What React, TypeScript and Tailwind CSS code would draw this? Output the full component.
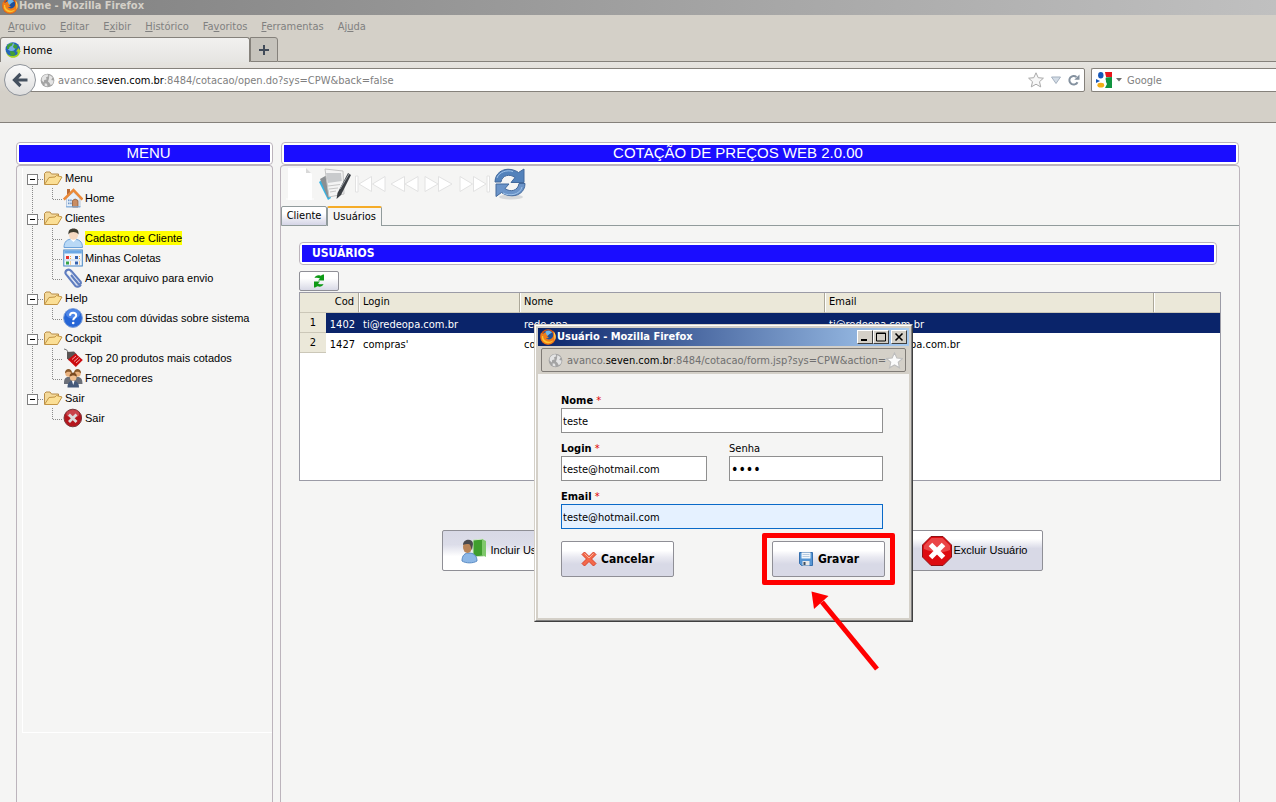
import React from "react";

const UI = "font-['DejaVu_Sans_Condensed','DejaVu_Sans',sans-serif]";
const ARIAL = "font-['Liberation_Sans',Arial,sans-serif]";

type IconProps = { className?: string };

function FirefoxIcon({ className }: IconProps) {
  return (
    <svg viewBox="0 0 16 16" className={className} aria-hidden="true">
      <circle cx="8" cy="8" r="7.8" fill="#d9560f" />
      <circle cx="8" cy="6.500" r="5.300" fill="#1d4f9c" />
      <path d="M5.500 2.500c2-1.500 5-1 6.500 1l-2.500 1.500-2 2-2-1.500z" fill="#6fb7e8" />
      <path d="M1 3.500C0 6 0 12 4.500 14.500c5 2.500 10-.5 11-5 .6-3-.5-5.500-2-7 .3 3 0 5.500-2 7-2 1.500-4.500 1-5.500-.2 1.500.2 2.500-.3 3.200-1.200C8 8.300 7 7.500 7.500 6.300 6.500 6 5.800 5 6 3.500 4.500 3.600 3.500 4.200 3 5 2 4.600 1.500 4.200 1 3.500z" fill="#ef7d1a" />
      <path d="M2 7c-.5 3 .5 5.500 3.500 6.800 3 1.200 6.500 0 8-2.600-2 1.500-5 2-7.300.7C4 10.700 3 9 3.200 7z" fill="#fbc42f" />
      <path d="M13.500 2.500c2.300 2.500 2.800 6 1 9 .2-3-.2-6-1-9z" fill="#fde06a" />
    </svg>
  );
}

function GreenGlobe({ className }: IconProps) {
  return (
    <svg viewBox="0 0 16 16" className={className} aria-hidden="true">
      <circle cx="7.800" cy="7.500" r="7.300" fill="#2566b8" />
      <circle cx="6.500" cy="5" r="4" fill="#8cc4f2" opacity=".8" />
      <path d="M2 4c1.500-2.500 4-3.200 6-3l-1 2.500L4.500 5 4 7 2 7zM9 2l3.500 1.500L12 6.500 9.500 6.500 8 5zM5 9l4 .5 1.500 2.500L8 14.200 5.500 13z" fill="#3f9f35" />
      <path d="M.8 9.500c2 5 8 6 11.700 2.500V9.500H11L13.500 6 16 9.700h-1c0 3-3 6-7 6.100-3.500 0-6.500-2.500-7.200-6.300z" fill="#a5d51f" />
    </svg>
  );
}

function GrayGlobe({ className }: IconProps) {
  return (
    <svg viewBox="0 0 16 16" className={className} aria-hidden="true">
      <circle cx="8" cy="8" r="7.300" fill="#a3a3a3" />
      <path d="M2 5C3.500 2.500 5.500 1.500 8 1.300L9 3.500 6.500 4.500 7 7 4.500 7.500 4 10 1.800 8zM10 2l3.500 2.500-1.500 3 2.500.5-.5 3-2.500 2L10 10.500 8.500 9l1-3zM5 11l2.500.5L8 14.500l-3-1z" fill="#e4e4e4" />
    </svg>
  );
}

function BackArrow({ className }: IconProps) {
  return (
    <svg viewBox="0 0 16 16" className={className} aria-hidden="true">
      <path d="M8.500 2L2.500 8l6 6M3 8h12.500" fill="none" stroke="#44505f" strokeWidth="3.200" />
    </svg>
  );
}

function Star({ className, fill = "#f7f7f7", stroke = "#a9a9a9" }: IconProps & { fill?: string; stroke?: string }) {
  return (
    <svg viewBox="0 0 16 16" className={className} aria-hidden="true">
      <path d="M8 .8l2.200 4.900 5.200.5-3.900 3.500 1.200 5.200L8 12.200l-4.700 2.700 1.200-5.200L.6 6.200l5.200-.5z" fill={fill} stroke={stroke} />
    </svg>
  );
}

function ReloadIcon({ className }: IconProps) {
  return (
    <svg viewBox="0 0 12 12" className={className} aria-hidden="true">
      <path d="M9.500 8.200A4.300 4.300 0 1 1 8.500 3" fill="none" stroke="#84919f" strokeWidth="2" />
      <path d="M11.500.5v5.200H6.300l1.700-1.700L9.500 2.500z" fill="#84919f" />
    </svg>
  );
}

function GoogleIcon({ className }: IconProps) {
  return (
    <svg viewBox="0 0 16 16" className={className} aria-hidden="true">
      <path d="M7 0h9v5H10z" fill="#e8141b" />
      <path d="M16 5v11H8l2-7-1-3.500z" fill="#11943f" />
      <path d="M5 0h4l1 5-1 3 2 4-2 4H1l-1-3 4-4-2-4z" fill="#fff" />
      <ellipse cx="4.800" cy="3.200" rx="2.700" ry="3.200" fill="#1556b8" />
      <ellipse cx="4.800" cy="13.200" rx="3.400" ry="2.400" fill="#f3ae16" />
      <path d="M0 7l4 2-4 2z" fill="#1556b8" />
    </svg>
  );
}

function Folder() {
  return (
    <svg viewBox="0 0 20 16" className="h-4 w-5" aria-hidden="true">
      <path d="M1.500 14V3.500L3 2h4l1.500 2h7v3" fill="#f3d99a" stroke="#b98d48" />
      <path d="M1.500 14.500L6 7.500l6-.5 1.500-1.500L19 7l-4.500 7.500z" fill="#fbdf95" stroke="#c39543" />
    </svg>
  );
}

function HouseIcon() {
  return (
    <svg viewBox="0 0 20 20" className="size-5" aria-hidden="true">
      <path d="M3.500 10L10.500 4l6.500 6v9H3.500z" fill="#e6eff9" stroke="#a9bdd6" strokeWidth=".8" />
      <path d="M4 1h3v5L4 8z" fill="#b96a35" />
      <path d="M.8 11.500L10.500 2l9 9.500" fill="none" stroke="#ea8a3a" strokeWidth="2.600" />
      <path d="M9.500 19v-6.500q2.500-3 5.500 0V19z" fill="#c98d63" stroke="#8a5a3a" strokeWidth=".8" />
      <path d="M5 11.500h1.500v1.700H5zM7.200 11.500h1.500v1.700H7.200zM5 14.500h1.500v1.700H5zM7.200 14.500h1.500v1.700H7.200z" fill="#6f97c8" />
      <path d="M3 18.800h14.500" stroke="#79abdf" />
    </svg>
  );
}

function PersonIcon() {
  return (
    <svg viewBox="0 0 20 20" className="size-5" aria-hidden="true">
      <path d="M1 19.500c0-6 3-8.500 9-8.500s9.500 2.500 9.500 8.500z" fill="#b9d9f6" stroke="#6ea3da" />
      <path d="M7 11l3.500 3 3-3z" fill="#fff" />
      <circle cx="10.500" cy="7.200" r="4.500" fill="#f6d9c1" />
      <path d="M5.500 6.500c-.5-4 1.500-6 5-6s5.500 2 5 6c-1.500-2-3-2.600-5-2.600S6.700 4.500 5.500 6.500z" fill="#3f3c2f" />
    </svg>
  );
}

function CalendarIcon() {
  return (
    <svg viewBox="0 0 20 20" className="size-5" aria-hidden="true">
      <rect x=".8" y="2" width="18.500" height="16" fill="#f1f6fc" stroke="#4685c4" />
      <rect x="1.300" y="2.500" width="17.500" height="3" fill="#6ba8e4" />
      <path d="M2 12h16" stroke="#c3d8ee" />
      <path d="M3 8h3v3H3z" fill="#e5322d" /><path d="M12 8h3v3h-3z" fill="#3763ad" />
      <path d="M3 13.500h3v3H3z" fill="#37a447" /><path d="M12 13.500h3v3h-3z" fill="#3763ad" />
      <path d="M7.500 8v3M16.500 8v3M7.500 13.500v3M16.500 13.500v3" stroke="#f1a33c" strokeDasharray="1 1" />
    </svg>
  );
}

function ClipIcon() {
  return (
    <svg viewBox="0 0 20 20" className="size-5" aria-hidden="true">
      <path d="M8 7l7 8.500c1.500 2 3.700 0 2.300-2L8 2.800C5.500 0 .8 3 3 6.200L12.500 18c1 1 4 1.200 5.300-1.200" fill="none" stroke="#5f7dbf" strokeWidth="2.200" />
      <path d="M7.500 4l9 10.500M4 5.500L13.500 17" stroke="#c3d2f0" strokeWidth=".9" />
    </svg>
  );
}

function HelpIcon() {
  return (
    <svg viewBox="0 0 20 20" className="size-5" aria-hidden="true">
      <circle cx="10" cy="10" r="9.400" fill="#2565d6" stroke="#7d9fd8" />
      <ellipse cx="10" cy="6" rx="7" ry="4.500" fill="#6a9cf2" opacity=".6" />
      <path d="M7 7.700c0-4 6.200-3.700 6.200-.3 0 2.200-3 2.300-3 4.800" fill="none" stroke="#fff" strokeWidth="2" />
      <circle cx="10.200" cy="15" r="1.300" fill="#fff" />
    </svg>
  );
}

function TagIcon() {
  return (
    <svg viewBox="0 0 20 20" className="size-5" aria-hidden="true">
      <path d="M1 1q3 0 4 3" fill="none" stroke="#777" />
      <path d="M4 4l7-.5 3 3-8 6-2-2z" fill="#5a5655" />
      <path d="M12.500 5.500l7.300 6.500-7 7L5 11.500z" fill="#cc0c10" />
      <path d="M9 11.500l4-3.500M11 13.500l4.500-4M13 15l4-3.500" stroke="#f7b7b7" strokeWidth=".9" />
    </svg>
  );
}

function PeopleIcon() {
  return (
    <svg viewBox="0 0 20 20" className="size-5" aria-hidden="true">
      <path d="M1 16c0-5 1-7 4.500-7S10 11 10 16zM10 16c0-5 1-7 4.500-7s5 2 5 7z" fill="#6b6f78" />
      <circle cx="5.500" cy="5.500" r="3.200" fill="#e9b27f" /><circle cx="14.500" cy="5.500" r="3.200" fill="#e9b27f" />
      <path d="M2 5.500C1.500-.5 9.500-.5 9 5.500 7 3 4 3 2 5.500zM11 5.500c-.5-6 7.500-6 7 0-2-2.500-5-2.500-7 0z" fill="#8b5a2b" />
      <path d="M4.500 19.500c0-5 2-6.500 5.500-6.500s6 1.500 6 6.500z" fill="#44597a" />
      <path d="M9 13l1.200 4 1.300-4z" fill="#fff" />
      <circle cx="10.200" cy="9.500" r="3.300" fill="#f0bf90" />
      <path d="M6.500 9c-.5-6 8-6 7.300 0-2-2-5-2-7.300 0z" fill="#7a4a22" />
    </svg>
  );
}

function ExitIcon() {
  return (
    <svg viewBox="0 0 20 20" className="size-5" aria-hidden="true">
      <circle cx="9.800" cy="10" r="8.800" fill="#b5161d" stroke="#7a3a3c" />
      <ellipse cx="9.800" cy="6" rx="6.500" ry="4" fill="#d9646a" opacity=".6" />
      <path d="M6 6.500l7.500 7.500M13.500 6.500L6 14" stroke="#dcdcdc" strokeWidth="2.800" />
    </svg>
  );
}

function Trunk({ show }: { show: boolean }) {
  return (
    <svg viewBox="0 0 20 20" className="size-5 shrink-0" aria-hidden="true">
      {show && <path d="M9.500 0v20" stroke="#8a8a8a" strokeDasharray="1 1" />}
    </svg>
  );
}

function Elbow({ last }: { last: boolean }) {
  return (
    <svg viewBox="0 0 20 20" className="size-5 shrink-0" aria-hidden="true">
      <path d={last ? "M9.500 0v11M10 11.500h10" : "M9.500 0v20M10 11.500h10"} fill="none" stroke="#8a8a8a" strokeDasharray="1 1" />
    </svg>
  );
}

function ToggleBox({ first, last }: { first: boolean; last: boolean }) {
  return (
    <svg viewBox="0 0 20 20" className="size-5" aria-hidden="true">
      {!first && <path d="M9.500 0v6" stroke="#8a8a8a" strokeDasharray="1 1" />}
      {!last && <path d="M9.500 16v4" stroke="#8a8a8a" strokeDasharray="1 1" />}
      <path d="M15 11.500h5" stroke="#8a8a8a" strokeDasharray="1 1" />
      <rect x="4.500" y="6.500" width="10" height="10" fill="#fff" stroke="#7e7e7e" />
      <path d="M7 11.500h5" stroke="#000" />
    </svg>
  );
}

type Leaf = { label: string; icon: React.ReactNode; active?: boolean };
const tree: { label: string; items: Leaf[] }[] = [
  { label: "Menu", items: [{ label: "Home", icon: <HouseIcon /> }] },
  {
    label: "Clientes",
    items: [
      { label: "Cadastro de Cliente", icon: <PersonIcon />, active: true },
      { label: "Minhas Coletas", icon: <CalendarIcon /> },
      { label: "Anexar arquivo para envio", icon: <ClipIcon /> },
    ],
  },
  { label: "Help", items: [{ label: "Estou com dúvidas sobre sistema", icon: <HelpIcon /> }] },
  {
    label: "Cockpit",
    items: [
      { label: "Top 20 produtos mais cotados", icon: <TagIcon /> },
      { label: "Fornecedores", icon: <PeopleIcon /> },
    ],
  },
  { label: "Sair", items: [{ label: "Sair", icon: <ExitIcon /> }] },
];

function MenuTree() {
  return (
    <ul className={`${ARIAL} text-[11px] leading-5 text-black`}>
      {tree.map((group, g) => {
        const last = g === tree.length - 1;
        return (
          <li key={group.label}>
            <div className="flex h-5 items-center">
              <button type="button" aria-label={`Recolher ${group.label}`} className="size-5 shrink-0">
                <ToggleBox first={g === 0} last={last} />
              </button>
              <Folder />
              <span className="pl-[2px]">{group.label}</span>
            </div>
            <ul>
              {group.items.map((item, i) => (
                <li key={item.label} className="flex h-5 items-center">
                  <Trunk show={!last} />
                  <Elbow last={i === group.items.length - 1} />
                  {item.icon}
                  <a href="#" className={item.active ? "ml-[2px] bg-[#ffff00] leading-[14px]" : "ml-[2px] leading-[14px]"}>
                    {item.label}
                  </a>
                </li>
              ))}
            </ul>
          </li>
        );
      })}
    </ul>
  );
}

function Banner({ children, className = "" }: { children: React.ReactNode; className?: string }) {
  return (
    <div className="rounded-[4px] border border-[#bcb4bc] bg-white p-[2px]">
      <h2 className={`h-[17px] bg-[#1a0dff] leading-4 text-white ${className}`}>{children}</h2>
    </div>
  );
}

function NewPageIcon() {
  return (
    <svg viewBox="0 0 32 32" className="size-8" aria-hidden="true">
      <path d="M4 0h18l6 6v26H4z" fill="#fff" />
      <path d="M22 0l5 5h-5z" fill="#d9d9d9" />
      <path d="M2 31h28" stroke="#fff" />
    </svg>
  );
}

function EditIcon() {
  return (
    <svg viewBox="0 0 32 32" className="size-8" aria-hidden="true">
      <path d="M0 14l6-4 6 20-3 2z" fill="#35b4e4" />
      <path d="M1 11l7-4 5 20-4 3z" fill="#8b8f92" />
      <path d="M6 1l18 2 1 23-15 3z" fill="#f4f4f4" stroke="#c4c4c4" />
      <path d="M7 5l15 0 .8 8-14 2z" fill="#c9cbcd" />
      <path d="M9 18l12-1.500M10 21l9-1M11 24l6-1" stroke="#c6c6c6" />
      <path d="M29 5l3 2L22 27l-4.500 4 1-6z" fill="#3b3f44" />
      <path d="M30 6L21 21" stroke="#9aa0a5" />
    </svg>
  );
}

function SkipIcon({ kind }: { kind: "first" | "prev" | "next" | "last" }) {
  const flip = kind === "next" || kind === "last";
  const bar = kind === "first" || kind === "last";
  return (
    <svg viewBox="0 0 32 32" className="size-8" aria-hidden="true">
      <g transform={flip ? "translate(32 0) scale(-1 1)" : undefined} fill="#fff" stroke="#e2e2e2" strokeWidth="1">
        {bar && <path d="M1.500 8h2.500v16H1.500z" />}
        <path d={bar ? "M17.500 8.500v15L5 16zM31 8.500v15L18.500 16z" : "M15.500 8.500v15L2 16zM29 8.500v15L16 16z"} />
      </g>
    </svg>
  );
}

function SyncIcon() {
  return (
    <svg viewBox="0 0 32 32" className="size-8" aria-hidden="true">
      <ellipse cx="17" cy="29" rx="12" ry="2.500" fill="#d6d8da" />
      <path d="M1 14C1 5 9 0 17 1.500c3 .5 5.500 1.500 7.500 3L30 1v13.500H17l4-5C16 5.500 8 7 7 14z" fill="#5382bb" stroke="#42699c" />
      <path d="M31 15.500c0 9-8 13.500-16 12-3-.5-5.500-1.500-7.500-3L2 28.500V16h13l-4 4.500c5 4 13 2.500 14-5z" fill="#6b94c9" stroke="#42699c" />
      <path d="M3 10C5 4 13 1.500 19 3.500M9 25c6 3.500 17 2 19-6" fill="none" stroke="#9fc3ea" />
    </svg>
  );
}

function GreenRefresh() {
  return (
    <svg viewBox="0 0 12 14" className="h-3.5 w-3" aria-hidden="true">
      <path d="M1.500 4C2.500 1.500 5 .8 7.500 1.800L10 .5h1V6.500H5L7 4.500C5 3.500 3.500 3.500 1.500 4z" fill="#0e9a16" />
      <path d="M10.500 10C9.500 12.500 7 13.200 4.500 12.200L2 13.500H1V7.500h6L5 9.500c2 1 3.500 1 5.500.5z" fill="#0e9a16" />
    </svg>
  );
}

function IncludeIcon() {
  return (
    <svg viewBox="0 0 26 26" className="size-[26px]" aria-hidden="true">
      <path d="M12 2l10-1 1 17-11 1z" fill="#3f9e2e" stroke="#cfe8c9" />
      <path d="M21 1l4 2v16l-4-2z" fill="#7fc86c" />
      <path d="M1 23c0-6 3-8 7-8s8 2 8 8c-4 2.500-11 2.500-15 0z" fill="#8db7e6" stroke="#5b8cc4" />
      <ellipse cx="6.500" cy="9" rx="4.500" ry="6" fill="#b98457" />
      <path d="M2 7C2 .5 12 0 12 6l-1 6C9.500 9 9.500 6 7.500 6S3 6 2 7z" fill="#4a4a4e" />
    </svg>
  );
}

function DeleteIcon() {
  return (
    <svg viewBox="0 0 32 32" className="size-8" aria-hidden="true">
      <path d="M10 1.500h12l8.500 8.500v12L22 30.500H10L1.500 22V10z" fill="#dd0b10" stroke="#8f1115" />
      <path d="M10.500 3h11L29 10.500V15C20 19 10 17 3 14v-3.500z" fill="#f36c6c" opacity=".6" />
      <path d="M9.500 9.500l13 13M22.500 9.500l-13 13" stroke="#fff" strokeWidth="5" />
    </svg>
  );
}

const toolbar = [
  { label: "Novo", icon: <NewPageIcon />, cls: "mr-[3px]" },
  { label: "Editar", icon: <EditIcon />, cls: "mr-[3px]" },
  { label: "Primeiro", icon: <SkipIcon kind="first" />, cls: "mr-[3px]" },
  { label: "Anterior", icon: <SkipIcon kind="prev" />, cls: "mr-[1px]" },
  { label: "Próximo", icon: <SkipIcon kind="next" />, cls: "mr-[5px]" },
  { label: "Último", icon: <SkipIcon kind="last" />, cls: "mr-[3px]" },
  { label: "Atualizar", icon: <SyncIcon />, cls: "" },
];

const rows = [
  { cod: "1402", login: "ti@redeopa.com.br", nome: "rede opa", email: "ti@redeopa.com.br", selected: true },
  { cod: "1427", login: "compras'", nome: "compras", email: "compras@redeopa.com.br", selected: false },
];

const headCell =
  "h-5 border-r border-b border-r-[#aca899] border-b-[#cbc7b8] bg-[#ebe8d9] px-1 pb-[2px] text-left font-normal shadow-[inset_1px_0_0_#fff]";

function UsersTable() {
  return (
    <div className="h-[189px] border border-[#9b9ba6] bg-white">
      <table className={`w-full table-fixed border-separate border-spacing-0 ${UI} text-[11px] leading-[17px]`}>
        <colgroup>
          <col className="w-[26px]" />
          <col className="w-[33px]" />
          <col className="w-[161px]" />
          <col className="w-[305px]" />
          <col className="w-[329px]" />
          <col />
        </colgroup>
        <thead>
          <tr>
            <th className="h-5 border-b border-[#cbc7b8] bg-[#ebe8d9]"></th>
            <th className="h-5 border-r border-b border-r-[#aca899] border-b-[#cbc7b8] bg-[#ebe8d9] px-1 pb-[2px] text-right font-normal">Cod</th>
            <th className={headCell}>Login</th>
            <th className={headCell}>Nome</th>
            <th className={headCell}>Email</th>
            <th className="h-5 border-b border-[#cbc7b8] bg-[#ebe8d9] shadow-[inset_1px_0_0_#fff]"></th>
          </tr>
        </thead>
        <tbody>
          {rows.map((r) => (
            <tr key={r.cod} className={r.selected ? "bg-[#0a246a] text-white" : "bg-white text-black"}>
              <td className="h-5 border-b border-[#cbc7b8] bg-[#ebe8d9] text-center text-black">{rows.indexOf(r) + 1}</td>
              <td className="h-5 pt-[3px] pr-1 text-right">{r.cod}</td>
              <td className="h-5 px-1 pt-[3px]">{r.login}</td>
              <td className="h-5 px-1 pt-[3px]">{r.nome}</td>
              <td className="h-5 px-1 pt-[3px]">{r.email}</td>
              <td></td>
            </tr>
          ))}
        </tbody>
      </table>
    </div>
  );
}

function CaptionButton({ label, children }: { label: string; children: React.ReactNode }) {
  return (
    <button
      type="button"
      aria-label={label}
      className="flex h-[14px] w-4 items-center justify-center border border-t-white border-r-[#404040] border-b-[#404040] border-l-white bg-[#d4d0c8]"
    >
      <svg viewBox="0 0 10 10" className="size-[10px]" aria-hidden="true">{children}</svg>
    </button>
  );
}

const field = "block h-[25px] w-full border px-[1px] pt-[1px] text-black outline-none";
const plainField = "border-[#8f8f8f] bg-white";
const formButton =
  "flex h-9 w-[113px] items-center justify-center gap-1 rounded-[2px] border border-[#8f8f96] bg-[linear-gradient(#ffffff_25%,#e9e9f1_45%,#d8d9e6_65%,#d8d9e6)] text-[12px] font-bold text-black";

function Popup() {
  return (
    <section
      role="dialog"
      aria-label="Usuário - Mozilla Firefox"
      className={`absolute top-[324px] left-[534px] w-[379px] border border-t-[#d4d0c8] border-r-[#404040] border-b-[#404040] border-l-[#d4d0c8] bg-[#d4d0c8] ${UI}`}
    >
      <div className="border border-t-white border-r-[#808080] border-b-[#808080] border-l-white p-[2px]">
        <header className="flex h-[18px] items-center bg-[linear-gradient(90deg,#0a246a,#a6caf0)] px-[2px]">
          <FirefoxIcon className="size-4 shrink-0" />
          <h1 className="flex-1 pl-[1px] text-[11px] font-bold text-white">Usuário - Mozilla Firefox</h1>
          <CaptionButton label="Minimizar"><path d="M1 8h6" stroke="#000" strokeWidth="2" /></CaptionButton>
          <CaptionButton label="Maximizar"><path d="M.5 1h9v8h-9zM0 1.500h10" fill="none" stroke="#000" /></CaptionButton>
          <span className="w-[2px]" />
          <CaptionButton label="Fechar"><path d="M1.500 1.500l7 7M8.500 1.500l-7 7" stroke="#000" strokeWidth="1.600" /></CaptionButton>
        </header>
        <div className="px-[3px] py-[2px]">
          <div className="flex h-6 items-center rounded-[2px] border border-[#7f7b76] pr-1 pl-1.5">
            <GrayGlobe className="size-[15px] shrink-0" />
            <div role="textbox" aria-label="Endereço" className="ml-1 flex-1 pt-[2px] text-[11px] whitespace-nowrap text-[#6f6f6f]">
              avanco.<span className="text-black">seven.com.br</span>:8484/cotacao/form.jsp?sys=CPW&amp;action=
            </div>
            <Star className="size-[17px] shrink-0" fill="#fbfbfb" stroke="#bdbdbd" />
          </div>
        </div>
        <form className="h-[244px] bg-[#f5f5f4] pt-[19px] pr-[26px] pl-[23px] text-[11px] leading-[15px] text-black">
          <div>
            <label htmlFor="nome" className="block"><b>Nome</b> <span className="text-[#e00000]">*</span></label>
            <input id="nome" type="text" defaultValue="teste" className={`${field} ${plainField}`} />
          </div>
          <div className="mt-2 flex justify-between">
            <div className="w-[146px]">
              <label htmlFor="login" className="block"><b>Login</b> <span className="text-[#e00000]">*</span></label>
              <input id="login" type="text" defaultValue="teste@hotmail.com" className={`${field} ${plainField}`} />
            </div>
            <div className="w-[154px]">
              <label htmlFor="senha" className="block">Senha</label>
              <input id="senha" type="password" defaultValue="1234" className={`${field} ${plainField} text-[14px]`} />
            </div>
          </div>
          <div className="mt-2">
            <label htmlFor="email" className="block"><b>Email</b> <span className="text-[#e00000]">*</span></label>
            <input id="email" type="text" defaultValue="teste@hotmail.com" className={`${field} border-[#0a6ac8] bg-[#e5f1ff]`} />
          </div>
          <div className="-mr-[2px] mt-3 flex justify-between">
            <button type="button" className={formButton}>
              <svg viewBox="0 0 16 16" className="size-4" aria-hidden="true">
                <path d="M3.500 1L8 5.500 12.500 1 15 3.500 10.500 8l4.500 4.500-2.500 2.500L8 10.500 3.500 15 1 12.500 5.500 8 1 3.500z" fill="#f4694a" stroke="#d9412a" />
                <path d="M3.500 2.500L8 7l4.500-4.500" fill="none" stroke="#fbb49c" />
              </svg>
              Cancelar
            </button>
            <button type="button" className={formButton}>
              <svg viewBox="0 0 16 16" className="size-4" aria-hidden="true">
                <path d="M1.500 1.500h13v13h-11l-2-2z" fill="#5595d4" stroke="#356fae" />
                <path d="M3.500 1.500h9v6h-9z" fill="#f4f8fc" />
                <path d="M4.500 3.500h7M4.500 5.500h7" stroke="#b7cbe0" />
                <path d="M4.500 10h7v4.500h-7z" fill="#e8e8e8" />
                <path d="M5.500 11h2v3h-2z" fill="#3c4e63" />
              </svg>
              Gravar
            </button>
          </div>
        </form>
      </div>
    </section>
  );
}

const menus: [string, string, string][] = [
  ["", "A", "rquivo"],
  ["", "E", "ditar"],
  ["E", "x", "ibir"],
  ["", "H", "istórico"],
  ["Fa", "v", "oritos"],
  ["", "F", "erramentas"],
  ["Aj", "u", "da"],
];

function BrowserChrome() {
  return (
    <header className={`bg-[#d4d0c8] ${UI} text-[11px]`}>
      <div className="flex h-[15px] items-center overflow-hidden bg-[linear-gradient(90deg,#808080,#c0c0c0)] pb-[3px] pl-[2px]">
        <FirefoxIcon className="size-4 shrink-0" />
        <span className="pl-[1px] font-bold text-[#d4d0c8]">Home - Mozilla Firefox</span>
      </div>
      <nav className="flex h-[22px] items-center gap-[14px] pt-[2px] pl-2 text-[#808080]">
        {menus.map(([a, u, b]) => (
          <button key={a + u + b} type="button">{a}<span className="underline">{u}</span>{b}</button>
        ))}
      </nav>
      <div className="flex h-[25px] items-end">
        <button type="button" className="flex h-[25px] w-[250px] items-center gap-[2px] rounded-t-[3px] border border-b-0 border-[#85817b] bg-[linear-gradient(#f2f1ef,#e6e5e2)] pl-1 text-black">
          <GreenGlobe className="size-4" />
          <span className="pt-[3px]">Home</span>
        </button>
        <button type="button" aria-label="Nova aba" className="flex h-[25px] w-7 items-center justify-center rounded-tr-[3px] border border-[#85817b] bg-[#c6c3bc]">
          <svg viewBox="0 0 10 10" className="size-[10px]" aria-hidden="true"><path d="M5 0v10M0 5h10" stroke="#414b59" strokeWidth="2" /></svg>
        </button>
        <div className="h-full flex-1 border-b border-[#85817b]" />
      </div>
      <div className="flex h-[61px] items-start border-b border-[#85817b] bg-[linear-gradient(#e6e4e0,#d4d0c8_50%)] pt-[2px]">
        <button type="button" aria-label="Voltar" className="z-10 ml-1 flex size-8 shrink-0 items-center justify-center rounded-full border border-[#8e939a] bg-[linear-gradient(#fbfbfb,#dedede)]">
          <BackArrow className="size-4" />
        </button>
        <div className="mt-1 -ml-2 flex h-6 flex-1 items-center rounded-r-[2px] border border-[#85817b] bg-white pr-1 pl-[11px]">
          <GrayGlobe className="size-[15px] shrink-0" />
          <div role="textbox" aria-label="Endereço" className="ml-[3px] flex-1 pt-[2px] whitespace-nowrap text-[#808080]">
            avanco.<span className="text-black">seven.com.br</span>:8484/cotacao/open.do?sys=CPW&amp;back=false
          </div>
          <Star className="size-4" />
          <svg viewBox="0 0 10 8" className="mx-[7px] h-2 w-[10px]" aria-hidden="true"><path d="M.5 1h9L5 7.500z" fill="#d3dce6" stroke="#a5b1bf" /></svg>
          <button type="button" aria-label="Recarregar"><ReloadIcon className="size-3" /></button>
        </div>
        <div className="mt-1 ml-[6px] flex h-6 w-[185px] items-center rounded-l-[2px] border border-r-0 border-[#85817b] bg-white pl-1">
          <GoogleIcon className="size-4 shrink-0" />
          <svg viewBox="0 0 6 4" className="mx-1 h-1 w-[6px] shrink-0" aria-hidden="true"><path d="M0 0h6L3 3.500z" fill="#6e6e6e" /></svg>
          <input type="search" aria-label="Pesquisar" placeholder="Google" className="ml-[1px] w-full min-w-0 bg-transparent pt-[2px] outline-none placeholder:text-[#808080]" />
        </div>
      </div>
    </header>
  );
}

const bigButton = `flex h-[41px] items-center rounded-[2px] border border-[#8f8f96] ${ARIAL} text-[11px] text-black`;

export default function App() {
  return (
    <div className="relative flex h-screen min-w-[1040px] flex-col overflow-hidden bg-[#f5f5f4]">
      <BrowserChrome />
      <main className="flex min-h-0 flex-1 gap-2 pt-[19px] pr-[37px] pl-4">
        <aside className="flex w-[257px] shrink-0 flex-col">
          <Banner className={`pl-2 text-center ${ARIAL} text-[15px]`}>MENU</Banner>
          <div className="flex-1 rounded-t-[4px] border border-b-0 border-[#bcb4bc] pt-[2px] pl-[5px]">
            <div className="h-[565px] border-b border-l border-white">
              <MenuTree />
            </div>
          </div>
        </aside>
        <section className="flex min-w-0 flex-1 flex-col">
          <Banner className={`pr-11 text-center ${ARIAL} text-[15px]`}>COTAÇÃO DE PREÇOS WEB 2.0.00</Banner>
          <div className="-mx-[1px] flex-1 rounded-t-[4px] border border-b-0 border-[#bcb4bc] pt-[2px]">
            <div className="flex pl-[3px]">
              {toolbar.map((t) => (
                <button key={t.label} type="button" aria-label={t.label} className={t.cls}>{t.icon}</button>
              ))}
            </div>
            <div role="tablist" className={`mt-[6px] flex h-5 items-end text-[11px] text-black ${UI}`}>
              <button type="button" role="tab" aria-selected="false" className="h-5 w-[46px] rounded-t-[2px] border border-[#919b9c] bg-[linear-gradient(#ffffff_35%,#d4d4e6)]">Cliente</button>
              <button type="button" role="tab" aria-selected="true" className="h-5 w-[55px] rounded-t-[2px] border border-t-2 border-b-0 border-[#919b9c] border-t-[#f5ac29]">Usuários</button>
              <div className="h-full flex-1 border-b border-[#919b9c]" />
            </div>
            <div className="px-[18px] pt-4">
              <div className="mr-1">
                <Banner className={`pl-[10px] ${UI} text-[12px] font-bold`}>USUÁRIOS</Banner>
              </div>
              <button type="button" aria-label="Atualizar lista" className="mt-1.5 mb-[1px] flex h-5 w-10 items-center justify-center rounded-[2px] border border-[#8f8f96] bg-[linear-gradient(#ffffff_35%,#d8d9e6)]">
                <GreenRefresh />
              </button>
              <UsersTable />
              <div className="mt-[49px] pr-9">
                <div className="mx-auto flex w-[601px] justify-between">
                  <button type="button" className={`${bigButton} w-[135px] bg-[linear-gradient(#d8d9e6,#dcdde9_35%,#ffffff_65%)] pl-[18px]`}>
                    <IncludeIcon /><span className="pl-1 whitespace-nowrap">Incluir Usuário</span>
                  </button>
                  <button type="button" className={`${bigButton} w-[137px] bg-[linear-gradient(#ffffff_20%,#d8d9e6_45%,#d8d9e6)] pl-[14px]`}>
                    <DeleteIcon /><span className="pl-[1px] whitespace-nowrap">Excluir Usuário</span>
                  </button>
                </div>
              </div>
            </div>
          </div>
        </section>
      </main>
      <Popup />
      <div className="pointer-events-none absolute top-[533px] left-[762px] h-[52px] w-[133px] rounded-[2px] border-[5px] border-[#ff0000]" />
      <svg viewBox="0 0 70 82" className="pointer-events-none absolute top-[590px] left-[810px] h-[82px] w-[70px]" aria-hidden="true">
        <path d="M67 79L12 12" stroke="#ff0000" strokeWidth="5" />
        <path d="M1.500 1.500l17 4.500L4 19z" fill="#ff0000" />
      </svg>
    </div>
  );
}
